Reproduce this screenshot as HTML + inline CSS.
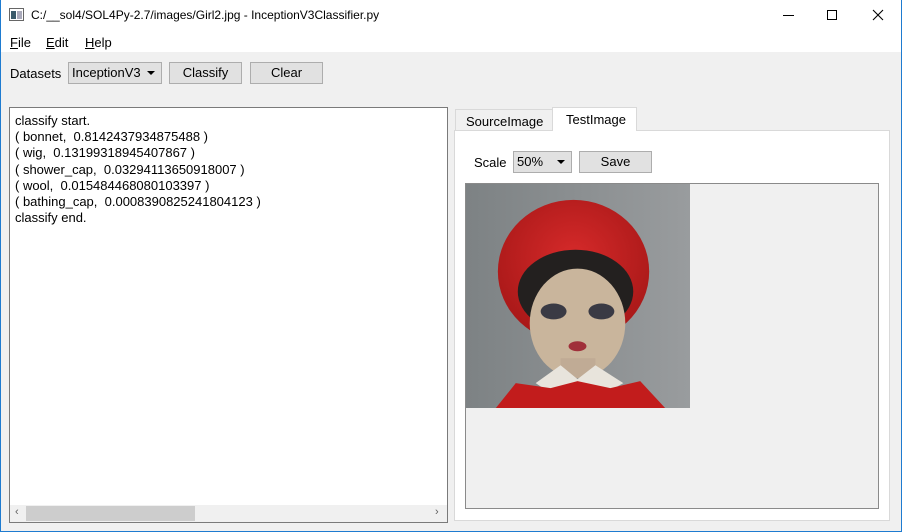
<!DOCTYPE html>
<html><head><style>
*{box-sizing:border-box;margin:0;padding:0}
body{width:902px;height:532px;overflow:hidden;font-family:"Liberation Sans",sans-serif;font-size:12px;color:#000;background:#f0f0f0;position:relative}
.win{position:absolute;left:0;top:0;width:902px;height:532px;border:1px solid #1e7bd0;border-top:none}
.title{position:absolute;left:1px;top:0;width:900px;height:30px;background:#fff}
.menu{position:absolute;left:1px;top:30px;width:900px;height:22px;background:#fff}
.abs{position:absolute}
.btn{position:absolute;background:#e1e1e1;border:1px solid #adadad;text-align:center;line-height:19px;font-size:13px}
.u{text-decoration:underline}
</style></head><body>
<div class="win"></div>
<div class="title">
<svg class="abs" style="left:8px;top:8px" width="16" height="14"><rect x="0.5" y="0.5" width="14" height="12" fill="#fff" stroke="#666"/><rect x="2" y="3" width="5" height="8" fill="#3a5a6a"/><rect x="8" y="3" width="5" height="8" fill="#aab"/></svg>
<div class="abs" style="left:30px;top:8px;font-size:12px">C:/__sol4/SOL4Py-2.7/images/Girl2.jpg - InceptionV3Classifier.py</div>
<div class="abs" style="left:782px;top:15px;width:11px;height:1px;background:#000"></div>
<div class="abs" style="left:826px;top:10px;width:10px;height:10px;border:1px solid #000"></div>
<svg class="abs" style="left:871px;top:9px" width="12" height="12"><path d="M1 1L11 11M11 1L1 11" stroke="#000" stroke-width="1.1"/></svg>
</div>
<div class="menu" style="font-size:13px">
<span class="abs" style="left:9px;top:5px"><span class="u">F</span>ile</span>
<span class="abs" style="left:45px;top:5px"><span class="u">E</span>dit</span>
<span class="abs" style="left:84px;top:5px"><span class="u">H</span>elp</span>
</div>
<div class="abs" style="left:10px;top:66px;font-size:13px">Datasets</div>
<div class="btn" style="left:68px;top:62px;width:94px;height:22px;text-align:left;padding-left:3px">InceptionV3<span class="abs" style="right:6px;top:8px;border:4px solid transparent;border-top:4px solid #000;border-bottom:none;width:0;height:0"></span></div>
<div class="btn" style="left:169px;top:62px;width:73px;height:22px">Classify</div>
<div class="btn" style="left:250px;top:62px;width:73px;height:22px">Clear</div>

<div class="abs" style="left:9px;top:107px;width:439px;height:416px;background:#fff;border:1px solid #7a7a7a">
<div style="padding:5px 0 0 5px;font-size:13px;line-height:16.2px">classify start.<br>( bonnet,&nbsp; 0.8142437934875488 )<br>( wig,&nbsp; 0.13199318945407867 )<br>( shower_cap,&nbsp; 0.03294113650918007 )<br>( wool,&nbsp; 0.015484468080103397 )<br>( bathing_cap,&nbsp; 0.0008390825241804123 )<br>classify end.</div>
<div class="abs" style="left:0;top:397px;width:437px;height:17px;background:#f0f0f0"></div>
<div class="abs" style="left:16px;top:398px;width:169px;height:15px;background:#cdcdcd"></div>
<div class="abs" style="left:5px;top:398px;font-size:11px;color:#606060">&#8249;</div>
<div class="abs" style="left:425px;top:398px;font-size:11px;color:#606060">&#8250;</div>
</div>

<div class="abs" style="left:455px;top:109px;width:98px;height:22px;background:#f0f0f0;border:1px solid #d9d9d9;border-bottom:none;font-size:13px;padding:4px 0 0 10px">SourceImage</div>
<div class="abs" style="left:552px;top:107px;width:85px;height:24px;background:#fff;border:1px solid #d9d9d9;border-bottom:none;font-size:13px;padding:4px 0 0 13px;z-index:2">TestImage</div>
<div class="abs" style="left:454px;top:130px;width:436px;height:391px;background:#fff;border:1px solid #d9d9d9"></div>
<div class="abs" style="left:474px;top:155px;font-size:13px">Scale</div>
<div class="btn" style="left:513px;top:151px;width:59px;height:22px;text-align:left;padding-left:3px">50%<span class="abs" style="right:6px;top:8px;border:4px solid transparent;border-top:4px solid #000;border-bottom:none;width:0;height:0"></span></div>
<div class="btn" style="left:579px;top:151px;width:73px;height:22px">Save</div>
<div class="abs" style="left:465px;top:183px;width:414px;height:326px;background:#f0f0f0;border:1px solid #8a8a8a"></div>
<svg class="abs" style="left:466px;top:184px" width="224" height="224" viewBox="0 0 225 225">
<defs><linearGradient id="bg" x1="0" x2="1"><stop offset="0" stop-color="#7d8284"/><stop offset="1" stop-color="#999c9e"/></linearGradient>
<radialGradient id="hat" cx=".5" cy=".4" r=".6"><stop offset="0" stop-color="#d62a2a"/><stop offset="1" stop-color="#a81818"/></radialGradient></defs>
<rect width="225" height="225" fill="url(#bg)"/>
<ellipse cx="108" cy="88" rx="76" ry="72" fill="url(#hat)"/>
<ellipse cx="110" cy="108" rx="58" ry="42" fill="#23201f"/>
<ellipse cx="112" cy="140" rx="48" ry="55" fill="#c9b59c"/>
<ellipse cx="88" cy="128" rx="13" ry="8" fill="#3a3a44"/>
<ellipse cx="136" cy="128" rx="13" ry="8" fill="#3a3a44"/>
<ellipse cx="112" cy="163" rx="9" ry="5" fill="#a0303a"/>
<rect x="95" y="175" width="35" height="20" fill="#c0ab95"/>
<path d="M70 200 L95 182 L112 196 L130 182 L158 200 L140 210 L112 200 L85 210Z" fill="#e8e4dc"/>
<path d="M30 225 L50 200 L85 205 L112 198 L145 205 L175 198 L200 225Z" fill="#c21c1c"/>
</svg>
</body></html>
